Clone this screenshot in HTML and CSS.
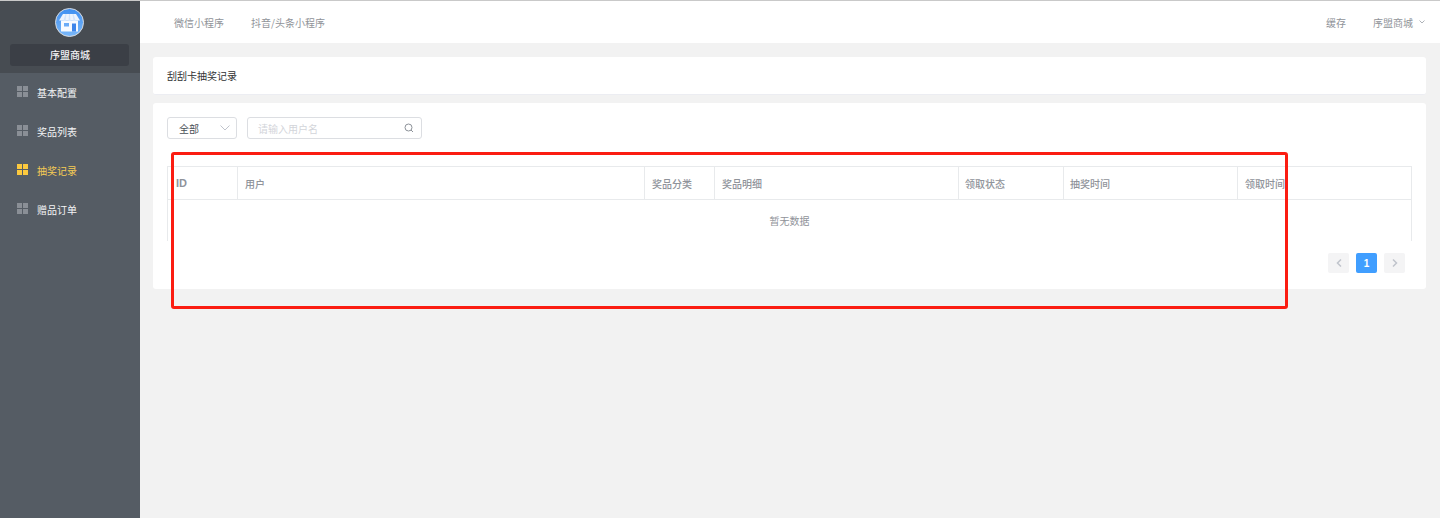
FILE: index.html
```html
<!DOCTYPE html>
<html lang="zh-CN">
<head>
<meta charset="utf-8">
<title>刮刮卡抽奖记录</title>
<link rel="stylesheet" href="styles.css">
</head>
<body>
<div class="app">
  <aside class="sidebar">
    <div class="brand">
      <svg class="logo" viewBox="0 0 29 29" width="29" height="29">
        <defs>
          <linearGradient id="sky" x1="0" y1="0" x2="0" y2="1">
            <stop offset="0" stop-color="#3f8ff0"/>
            <stop offset="1" stop-color="#7ab8fa"/>
          </linearGradient>
        </defs>
        <circle cx="14.500" cy="14.500" r="14" fill="url(#sky)" stroke="#d8dadd" stroke-width="1"/>
        <path d="M8 6h13l4 6.500H4z" fill="#eef4fd"/>
        <path d="M10.500 6h1l-1 6.500h-2zM14 6h1l.5 6.500h-2zM17.500 6h1l2 6.500h-2z" fill="#d3e4fb"/>
        <path d="M6 12.500h17v11H6z" fill="#f7faff"/>
        <path d="M9 15h5v3.500H9z" fill="#6aabf7"/>
        <path d="M17 15.500h4v8h-4z" fill="#3d85ea"/>
      </svg>
      <div class="brand-name">序盟商城</div>
    </div>
    <nav class="menu">
      <a class="menu-item"><span class="grid-icon"><i></i><i></i><i></i><i></i></span>基本配置</a>
      <a class="menu-item"><span class="grid-icon"><i></i><i></i><i></i><i></i></span>奖品列表</a>
      <a class="menu-item active"><span class="grid-icon"><i></i><i></i><i></i><i></i></span>抽奖记录</a>
      <a class="menu-item"><span class="grid-icon"><i></i><i></i><i></i><i></i></span>赠品订单</a>
    </nav>
  </aside>
  <div class="main">
    <header class="topbar">
      <div class="tabs"><a>微信小程序</a><a>抖音/头条小程序</a></div>
      <div class="top-right">
        <a class="cache">缓存</a>
        <a class="shop">序盟商城
          <svg viewBox="0 0 6 4" width="6" height="4"><path d="M.5.500 3 3 5.500.500" fill="none" stroke="#aeb2b8"/></svg>
        </a>
      </div>
    </header>
    <div class="content">
      <section class="card title-card">刮刮卡抽奖记录</section>
      <section class="card list-card">
        <div class="filters">
          <div class="select">全部
            <svg viewBox="0 0 10 6" width="10" height="6"><path d="M.5.500 5 5 9.500.500" fill="none" stroke="#c0c4cc"/></svg>
          </div>
          <div class="search">
            <span>请输入用户名</span>
            <svg viewBox="0 0 10 10" width="10" height="10"><circle cx="4.500" cy="4.500" r="3.500" fill="none" stroke="#8d9299"/><path d="M7 7l2 2" stroke="#8d9299"/></svg>
          </div>
        </div>
        <div class="table">
          <div class="row head">
            <div class="c1 id">ID</div><div class="c2">用户</div><div class="c3">奖品分类</div><div class="c4">奖品明细</div><div class="c5">领取状态</div><div class="c6">抽奖时间</div><div class="c7">领取时间</div>
          </div>
          <div class="empty">暂无数据</div>
        </div>
        <div class="pager">
          <span class="pg"><svg viewBox="0 0 6 8" width="6" height="8"><path d="M5 .5 1.500 4 5 7.500" fill="none" stroke="#c0c4cc" stroke-width="1.500"/></svg></span>
          <span class="pg current">1</span>
          <span class="pg"><svg viewBox="0 0 6 8" width="6" height="8"><path d="M1 .5 4.500 4 1 7.500" fill="none" stroke="#c0c4cc" stroke-width="1.500"/></svg></span>
        </div>
      </section>
    </div>
  </div>
</div>
<div class="highlight"></div>
</body>
</html>
```
FILE: styles.css
```css
* { box-sizing: border-box; }
html, body { margin: 0; height: 100%; }
body {
  font-family: "Noto Sans CJK SC", "Liberation Sans", sans-serif;
  font-size: 10px;
  background: #f2f2f2;
  overflow: hidden;
}
.app { display: flex; height: 518px; border-top: 1px solid #c9c9c9; }
.sidebar { width: 140px; flex: none; background: #555c64; color: #fff; }
.brand {
  height: 72px;
  background: #474c52;
  display: flex;
  flex-direction: column;
  align-items: center;
  padding-top: 7px;
  padding-right: 1px;
}
.logo { display: block; }
.brand-name {
  width: 119px;
  height: 22px;
  margin-top: 7px;
  padding-left: 1px;
  background: #3b3f46;
  border-radius: 3px;
  text-align: center;
  line-height: 21px;
  font-weight: 500;
  color: #f2f3f5;
}
.menu { display: flex; flex-direction: column; }
.menu-item {
  height: 39px;
  display: flex;
  align-items: center;
  padding-left: 17px;
  color: #f4f5f6;
}
.menu-item.active { color: #f6cc55; }
.grid-icon {
  width: 11px;
  height: 11px;
  margin-right: 9px;
  margin-top: -3px;
  display: grid;
  grid-template-columns: 5px 5px;
  grid-template-rows: 5px 5px;
  gap: 1px;
}
.grid-icon i { background: #8a8f96; }
.active .grid-icon i { background: #fcc93e; }
.main { flex: 1; min-width: 0; display: flex; flex-direction: column; }
.topbar {
  height: 42px;
  flex: none;
  background: #fff;
  display: flex;
  justify-content: space-between;
  align-items: center;
  padding: 0 15px 0 34px;
  color: #909399;
}
.tabs { display: flex; gap: 27px; }
.top-right { display: flex; align-items: center; gap: 27px; }
.shop { display: flex; align-items: center; gap: 6px; }
.content { padding: 14px 14px 0 13px; display: flex; flex-direction: column; gap: 8px; }
.card { background: #fff; border-radius: 3px; }
.title-card {
  height: 38px;
  padding-left: 14px;
  display: flex;
  align-items: center;
  color: #303133;
  border-bottom: 1px solid #ecedf2;
}
.list-card { height: 186px; padding: 14px 14px 0; }
.filters { display: flex; gap: 10px; }
.select, .search {
  height: 22px;
  border: 1px solid #dcdee2;
  border-radius: 3px;
  display: flex;
  align-items: center;
  justify-content: space-between;
}
.select { width: 70px; padding: 0 6px 0 11px; color: #4a4f57; }
.search { width: 175px; padding: 0 7px 0 10px; color: #d3d5da; }
.table {
  margin-top: 27px;
  height: 75px;
  border-top: 1px solid #e8eaec;
  border-left: 1px solid #e8eaec;
  border-right: 1px solid #e8eaec;
}
.row { display: flex; height: 33px; border-bottom: 1px solid #e8eaec; color: #8f939a; font-weight: 500; }
.row > div {
  display: flex;
  align-items: center;
  padding-left: 7px;
  border-right: 1px solid #e8eaec;
}
.row > div:last-child { border-right: 0; }
.id { font-family: "Liberation Sans", sans-serif; font-size: 11px; font-weight: 700; padding-left: 8px !important; }
.c1 { width: 70px; }
.c2 { width: 407px; }
.c3 { width: 70px; }
.c4 { width: 244px; }
.c5 { width: 105px; padding-left: 6px !important; }
.c6 { width: 174px; padding-left: 6px !important; }
.c7 { flex: 1; }
.empty { height: 41px; display: flex; align-items: center; justify-content: center; color: #909399; }
.pager { display: flex; justify-content: flex-end; gap: 7px; margin-top: 12px; padding-right: 7px; }
.pg {
  width: 21px;
  height: 20px;
  border-radius: 2px;
  background: #f4f4f5;
  display: flex;
  align-items: center;
  justify-content: center;
}
.pg.current { background: #409eff; color: #fff; font-weight: 700; font-family: "Liberation Sans", sans-serif; }
.highlight {
  position: absolute;
  left: 171px;
  top: 152px;
  width: 1117px;
  height: 157px;
  border: 3px solid #fb1d12;
  border-radius: 3px;
}
```
